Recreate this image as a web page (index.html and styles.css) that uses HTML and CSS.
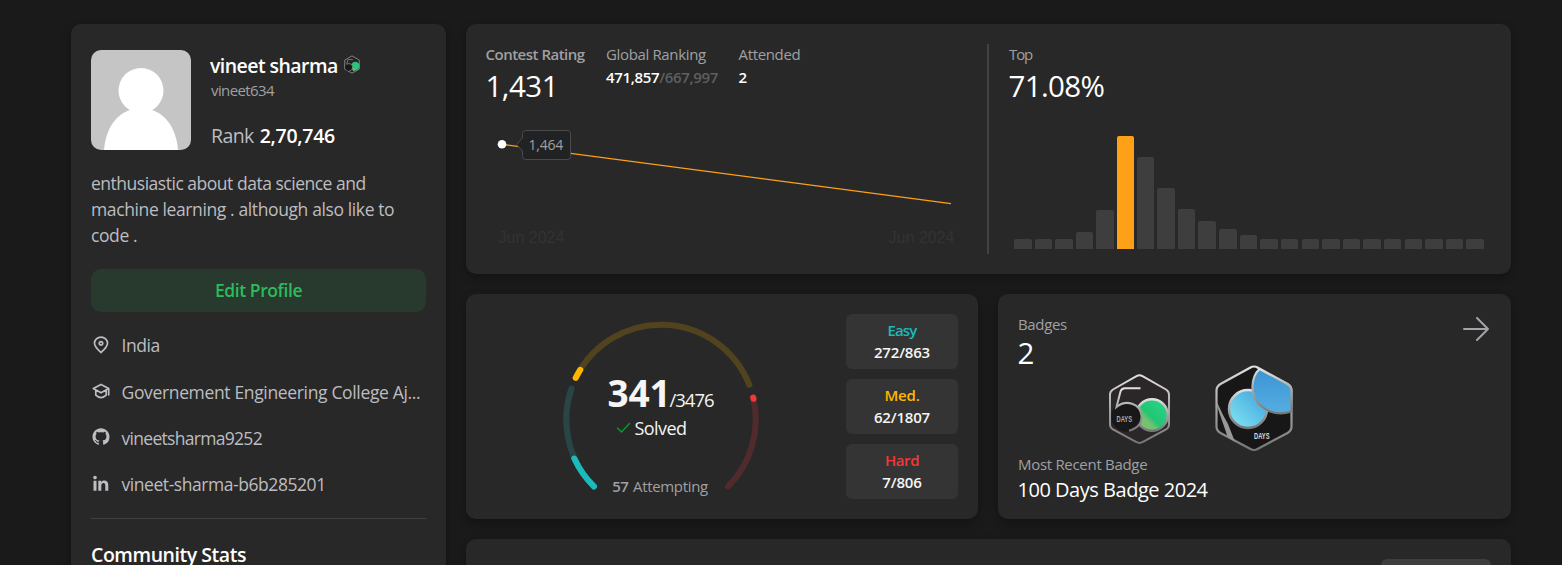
FILE: index.html
```html
<!DOCTYPE html>
<html lang="en">
<head>
<meta charset="utf-8">
<title>vineet sharma - Profile</title>
<link rel="stylesheet" href="styles.css">
</head>
<body>
<main class="page">
  <aside class="card profile">
    <header class="profile-head">
      <svg class="avatar" viewBox="0 0 100 100"><rect width="100" height="100" fill="#c5c5c5"/><circle cx="50" cy="40.500" r="22.500" fill="#fff"/><path d="M13 100C15 76 27 64 39 60Q50 57 61 60C73 64 85 76 87 100Z" fill="#fff"/></svg>
      <div class="who">
        <div class="name-row"><h1 class="name">vineet sharma</h1>
          <svg class="mini-badge" viewBox="2 12 65 76"><path d="M34.500 15 64 32V69L34.500 85 5 69V32Z" fill="#242223" stroke="#858585" stroke-width="4"/><circle cx="48" cy="56" r="17" fill="#27c57a"/><path d="M34 60 50 73 38 76Z" fill="#7fc06a"/><circle cx="21" cy="61" r="14" fill="#171717"/><path d="M38 30H18L13 49C26 43 37 50 37 60S31 74 24 76" fill="none" stroke="#777" stroke-width="4"/></svg>
        </div>
        <p class="handle">vineet634</p>
        <p class="rank"><span class="rank-label">Rank</span><b>2,70,746</b></p>
      </div>
    </header>
    <p class="bio"><span class="bio-a">enthusiastic about data science and</span><br><span class="bio-b">machine learning . although also like to</span><br>code .</p>
    <button class="edit">Edit Profile</button>
    <ul class="facts">
      <li><svg class="ico" viewBox="0 0 20 20"><path d="M10 17.600C6.500 14.400 3.500 11.800 3.500 8.300a6.500 6.200 0 0 1 13 0C16.500 11.800 13.500 14.400 10 17.600Z" class="ln"/><circle cx="10" cy="8.300" r="1.700" class="ln"/></svg><span class="f1">India</span></li>
      <li><svg class="ico" viewBox="0 0 20 20"><path d="M2.300 7.600 10 3.400l7.700 4.200-7.700 4.200ZM4.800 9v5.200c3.200 3 7.200 3 10.400 0V9M17.700 7.600v6.200" class="ln"/></svg><span class="f2">Governement Engineering College Aj...</span></li>
      <li><svg class="ico" viewBox="0 0 20 20"><path class="fl" transform="translate(1.500 1.200) scale(1.0625)" d="M8 0C3.580 0 0 3.580 0 8c0 3.540 2.290 6.530 5.470 7.590.4.070.550-.17.550-.38 0-.19-.01-.82-.01-1.490-2.010.37-2.530-.49-2.690-.94-.09-.23-.48-.94-.82-1.130-.28-.15-.68-.52-.01-.53.630-.01 1.080.58 1.230.82.720 1.210 1.870.87 2.330.66.070-.52.280-.87.510-1.070-1.780-.2-3.640-.89-3.640-3.950 0-.87.310-1.590.820-2.150-.08-.2-.36-1.020.080-2.120 0 0 .67-.21 2.200.820.640-.18 1.320-.27 2-.27s1.360.090 2 .27c1.530-1.040 2.200-.82 2.200-.82.440 1.100.160 1.920.080 2.120.510.560.820 1.270.820 2.150 0 3.070-1.870 3.750-3.650 3.950.290.250.540.730.540 1.480 0 1.070-.01 1.930-.01 2.200 0 .210.150.460.550.380A8.010 8.010 0 0 0 16 8c0-4.420-3.580-8-8-8Z"/></svg><span class="f3">vineetsharma9252</span></li>
      <li><svg class="ico" viewBox="0 0 20 20"><circle cx="4" cy="4.600" r="1.800" class="fl"/><path class="fl" transform="translate(0 .8)" d="M2.500 7h3v10h-3ZM7.300 7h2.900v1.400c.6-1 1.600-1.700 3.100-1.700 2.700 0 4 1.600 4 4.600V17h-3v-5c0-1.800-.5-2.700-1.800-2.700-1.400 0-2.200 1-2.200 2.700v5h-3Z"/></svg><span class="f4">vineet-sharma-b6b285201</span></li>
    </ul>
    <h2 class="community">Community Stats</h2>
  </aside>

  <section class="main">
    <section class="card contest">
      <div class="rating">
        <div class="metrics">
          <div class="m1"><p class="label strong">Contest Rating</p><p class="big n1431">1,431</p></div>
          <div class="m2"><p class="label gr">Global Ranking</p><p class="val"><span class="gr-n">471,857</span><span class="dim">/667,997</span></p></div>
          <div><p class="label att">Attended</p><p class="val">2</p></div>
        </div>
        <svg class="line" viewBox="486 120 500 134" width="500" height="134">
          <path d="M502 144.300 951 203.600" stroke="#ffa116" stroke-width="1.300" fill="none"/>
          <circle cx="502" cy="144.200" r="4.300" fill="#fff"/>
          <path d="M525.500 130.500h42a3 3 0 0 1 3 3v23a3 3 0 0 1-3 3h-42a3 3 0 0 1-3-3V151l-6-6.500 6-6.500v-4.500a3 3 0 0 1 3-3Z" fill="#212224" stroke="#4a4a4c"/>
          <text x="528.500" y="150" class="tip">1,464</text>
          <text x="498.500" y="243" class="axis">Jun 2024</text>
          <text x="888.500" y="243" class="axis">Jun 2024</text>
        </svg>
      </div>
      <div class="top">
        <p class="label topl">Top</p><p class="big pct">71.08%</p>
        <div class="bars">
          <i style="height:10px"></i><i style="height:10px"></i><i style="height:10px"></i><i style="height:16.5px"></i><i style="height:39px"></i><i class="me" style="height:112.5px"></i><i style="height:91.5px"></i><i style="height:60.5px"></i><i style="height:40px"></i><i style="height:28px"></i><i style="height:20px"></i><i style="height:14px"></i><i style="height:10px"></i><i style="height:10px"></i><i style="height:10px"></i><i style="height:10px"></i><i style="height:10px"></i><i style="height:10px"></i><i style="height:10px"></i><i style="height:10px"></i><i style="height:10px"></i><i style="height:10px"></i><i style="height:10px"></i>
        </div>
      </div>
    </section>

    <div class="pair">
      <section class="card solved">
        <svg class="gauge" viewBox="551 314 220 185" width="220" height="185">
          <g fill="none" stroke-width="6" stroke-linecap="round">
            <path d="M594 486.500A95 95 0 0 1 571.500 388.500" stroke="#294545"/>
            <path d="M575.700 377.800A95 95 0 0 1 749.300 384.800" stroke="#52431f"/>
            <path d="M753.200 397.600A95 95 0 0 1 728 486.500" stroke="#512b2b"/>
            <path d="M594 486.500A95 95 0 0 1 574.300 458.500" stroke="#1cbaba"/>
            <path d="M575.700 377.800A95 95 0 0 1 580.200 369.800" stroke="#ffb700"/>
            <path d="M753.200 397.600A95 95 0 0 1 753.500 398.800" stroke="#f63737"/>
          </g>
          <text x="607.500" y="407" class="g341">341</text>
          <text x="669.500" y="407" class="gtot">/3476</text>
          <path d="m617.500 428 4 4 8-8.500" stroke="#02a12c" stroke-width="1.300" fill="none" stroke-linecap="round"/>
          <text x="634.500" y="435" class="gsol">Solved</text>
          <text x="612.300" y="492" class="g57">57</text>
          <text x="633" y="492" class="gatt">Attempting</text>
        </svg>
        <div class="levels">
          <div class="level"><span class="easy">Easy</span><span>272/863</span></div>
          <div class="level"><span class="med">Med.</span><span>62/1807</span></div>
          <div class="level"><span class="hard">Hard</span><span>7/806</span></div>
        </div>
      </section>
      <section class="card badges">
        <div class="badges-top">
          <div><p class="label bl">Badges</p><p class="two">2</p></div>
          <svg class="arrow" viewBox="0 0 26 24" width="26" height="24"><path d="M1 12h24M14 1l11 11-11 11" fill="none" stroke="#a3a3a8" stroke-width="2" stroke-linecap="round" stroke-linejoin="round"/></svg>
        </div>
        <svg class="medals" viewBox="0 0 190 90" width="190" height="90">
          <defs>
            <linearGradient id="rim" x1="0" y1="0" x2="0" y2="1"><stop offset="0" stop-color="#e0e0e0"/><stop offset=".5" stop-color="#a5a5a5"/><stop offset="1" stop-color="#777"/></linearGradient>
            <linearGradient id="green" x1="0" y1="1" x2="1" y2="0"><stop offset="0" stop-color="#94bd62"/><stop offset=".34" stop-color="#6fc272"/><stop offset=".46" stop-color="#23c574"/><stop offset="1" stop-color="#27d98a"/></linearGradient>
            <linearGradient id="cyan" x1="0" y1="1" x2="1" y2="0"><stop offset="0" stop-color="#83e8f4"/><stop offset="1" stop-color="#3d9fdc"/></linearGradient>
            <linearGradient id="blue" x1="0" y1="0" x2="0" y2="1"><stop offset="0" stop-color="#3c94d3"/><stop offset="1" stop-color="#55aee2"/></linearGradient>
          </defs>
          <g transform="translate(0 -5.5)">
            <path d="M31.500 19.700Q34.500 18 37.500 19.700L61 33Q64 35 64 38V68Q64 71 61 73L37.500 85.500Q34.500 87.300 31.500 85.500L8 73Q5 71 5 68V38Q5 35 8 33Z" fill="#2b2627" stroke="url(#rim)" stroke-width="2"/>
            <circle cx="47" cy="58.500" r="15.800" fill="url(#green)" stroke="url(#rim)" stroke-width="2.400"/>
            <circle cx="21.500" cy="60" r="15.200" fill="#191819"/>
            <path d="M35.500 31.700H20Q16.500 31.700 15.500 35L11.500 50.500C21 42.500 35.500 47 36.500 59.500Q37 70.500 24 74.300" fill="none" stroke="url(#rim)" stroke-width="2"/>
            <text x="11.500" y="65.800" class="days" textLength="15.500" lengthAdjust="spacingAndGlyphs">DAYS</text>
          </g>
          <path d="M145.500 5.500Q149 3.500 152.500 5.500L182.500 22Q186.500 24.500 186.500 28.500V64.500Q186.500 68.500 182.500 71L152.500 87Q149 89 145.500 87L115.500 71Q111.500 68.500 111.500 64.500V28.500Q111.500 24.500 115.500 22Z" fill="#171717" stroke="url(#rim)" stroke-width="2.200"/>
          <path d="M112 40Q117 52 123 62L130 80 122.500 74.500 112 44Z" fill="#989898"/>
          <circle cx="143" cy="47" r="19" fill="url(#cyan)" stroke="url(#rim)" stroke-width="2.500"/>
          <path d="M154.500 7 182.500 22Q186.500 24.500 186.500 28.500V49.500C166 56 147.500 43 147.400 25Q147.800 13 154.500 7Z" fill="url(#blue)" stroke="url(#rim)" stroke-width="2.200"/>
          <text x="149" y="77" class="days light" textLength="15.500" lengthAdjust="spacingAndGlyphs">DAYS</text>
        </svg>
        <p class="label recent">Most Recent Badge</p>
        <p class="latest">100 Days Badge 2024</p>
      </section>
    </div>

    <section class="card activity"><div class="tab"></div></section>
  </section>
</main>
</body>
</html>
```
FILE: styles.css
```css
*{box-sizing:border-box}
body{margin:0;background:#1a1a1a;color:#fff;font-family:"Open Sans","Noto Sans",sans-serif;font-size:15px;white-space:nowrap}
h1,h2,p,ul{margin:0;padding:0}
svg{display:block;flex:none}
.page{display:flex;gap:20px;height:565px;padding:24px 51px 0 71px;overflow:hidden}
.card{background:#282828;border-radius:10px;box-shadow:0 4px 10px rgba(0,0,0,.28)}
.profile{width:375px;padding:26px 20px 0;flex:none;border-radius:10px 10px 0 0;overflow:hidden}
.profile-head{display:flex;gap:20px;height:100px}
.avatar{width:100px;height:100px;border-radius:10px}
.who{padding-top:3px}
.name-row{display:flex;align-items:center;gap:6px;height:26px;margin-left:-1px}
.name{font-size:19.5px;line-height:26px;font-weight:600;letter-spacing:-.56px}
.mini-badge{width:16px;height:19px;margin-top:-3px}
.handle{font-size:15px;line-height:22px;color:#a0a0a2;letter-spacing:-.6px}
.rank{display:flex;gap:6px;margin-top:22px;font-size:19.5px;line-height:26px}
.rank-label{color:#bdbdc2;letter-spacing:-.61px}
.rank b{font-weight:600;letter-spacing:-.28px}
.bio{margin-top:20px;font-size:17.5px;line-height:26px;color:#bdbdc0;letter-spacing:-.4px}
.bio-a{letter-spacing:-.485px}
.bio-b{letter-spacing:-.385px}
.edit{display:block;width:100%;height:43px;margin-top:21px;padding:0;border:0;border-radius:10px;background:#28392d;color:#2cbb5d;font:600 17.5px/43px "Open Sans","Noto Sans",sans-serif;letter-spacing:-.417px}
.facts{list-style:none;display:flex;flex-direction:column;gap:20.33px;padding:20px 0 21px;border-bottom:1px solid #414141;font-size:17.5px;line-height:26px;color:#bdbdc0}
.facts li{display:flex;gap:10.5px;height:26px;align-items:center}
.ico{width:20px;height:20px;margin-top:-1px}
.ln{fill:none;stroke:#bdbdc2;stroke-width:1.7;stroke-linejoin:round;stroke-linecap:round}
.fl{fill:#bdbdc2}
.f1{letter-spacing:-.43px}
.f2{letter-spacing:-.345px;padding-top:1px}
.f3{letter-spacing:-.7px}
.f4{letter-spacing:-.44px}
.community{margin-top:23px;font-size:19.5px;line-height:26px;font-weight:600;letter-spacing:-.46px}
.main{display:flex;flex-direction:column;gap:20px;width:1045px}
.contest{display:flex;flex:none;height:250px;padding:20px}
.rating{width:503px;border-right:2px solid #424242;display:flex;flex-direction:column;justify-content:space-between}
.metrics{display:flex;height:58px;margin-top:-1px}
.m1{width:120px}
.m2{width:132.5px}
.label{font-size:15px;line-height:23px;color:#a0a0a2}
.strong{font-weight:600;letter-spacing:-.5px;margin-left:-.5px}
.gr{letter-spacing:-.352px}
.att{letter-spacing:-.343px}
.big{font-size:29.5px;line-height:39px}
.n1431{letter-spacing:-.5px;margin-left:-.5px}
.val{font-weight:600;line-height:22px}
.gr-n{letter-spacing:-.327px}
.dim{color:#5f5f5f;letter-spacing:-.35px}
.tip{font-size:14px;fill:#a0a0a2;letter-spacing:-.2px}
.axis{font-family:"Liberation Sans",Arial,sans-serif;font-size:16px;fill:#333}
.top{flex:1;padding-left:20px;display:flex;flex-direction:column}
.topl{margin-top:-1px;letter-spacing:-1.1px}
.pct{letter-spacing:-.644px;margin-left:-.5px}
.bars{display:flex;align-items:flex-end;justify-content:space-between;flex:1;margin:0 7px 5.5px 5px}
.bars i{width:17.5px;background:#3e3e3e;border-radius:2px 2px 0 0}
.bars .me{width:16.5px;background:#ffa116}
.pair{display:grid;grid-template-columns:512px 513px;grid-template-rows:225px;gap:20px;flex:none;height:225px}
.solved{display:flex;padding:20px 20px 20px 85px;justify-content:space-between}
.g341{font-size:37px;font-weight:700;fill:#f5f5f5;letter-spacing:-.2px}
.gtot{font-size:18.5px;fill:#f5f5f5;letter-spacing:-1px}
.gsol{font-size:18px;fill:#f5f5f5;letter-spacing:-.56px}
.g57{font-size:15px;font-weight:600;fill:#a0a0a2;letter-spacing:-.6px}
.gatt{font-size:15px;fill:#a0a0a2;letter-spacing:-.333px}
.levels{display:flex;flex-direction:column;gap:10px;width:112px}
.level{display:flex;flex-direction:column;align-items:center;height:55px;padding-top:5px;background:#343434;border-radius:6px;font-size:15px;font-weight:600;line-height:22px;letter-spacing:-.18px;color:#f5f5f5}
.easy{color:#1cbaba;font-size:15px;letter-spacing:-.8px}
.med{color:#ffb700}
.hard{color:#f63737;letter-spacing:-.4px}
.badges{padding:19px 20px 0;display:flex;flex-direction:column}
.badges-top{display:flex;justify-content:space-between;height:49px}
.bl{letter-spacing:-.354px}
.two{font-size:29.5px;line-height:34px;margin-left:-.5px}
.arrow{margin:4px 2px 0 0}
.medals{margin:0 0 0 87px}
.recent{letter-spacing:-.3px;margin-top:1px}
.latest{font-size:20px;line-height:27px;letter-spacing:-.48px;margin-left:-.5px}
.days{font-family:"Liberation Sans",Arial,sans-serif;font-size:9px;font-weight:700;fill:#aaa}
.light{fill:#ddd}
.activity{flex:1;padding:20px 20px 0;display:flex;justify-content:flex-end;border-radius:10px 10px 0 0}
.tab{width:110px;border-radius:6px 6px 0 0;background:#3e3e3e}
```
